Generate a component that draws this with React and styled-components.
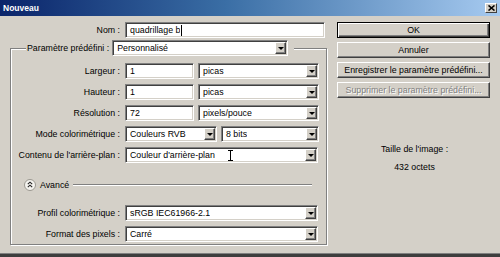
import React from 'react'
import styled, { createGlobalStyle } from 'styled-components'

const GlobalStyle = createGlobalStyle`
  body {
    margin: 0;
    background: #d4d0c8;
  }
  * { box-sizing: border-box; }
`

function App() {
  return (
    <>
      <GlobalStyle />
      <Window>
        <TitleBar>
          <span>Nouveau</span>
          <CloseBtn>
            <svg width="7" height="6" viewBox="0 0 7 6">
              <path d="M0.5 0.5 L6.5 5.5 M6.5 0.5 L0.5 5.5" stroke="#000" strokeWidth="1.6" />
            </svg>
          </CloseBtn>
        </TitleBar>
        <Body>
          <LeftCol>
            <Row>
              <Label w={121}>Nom :</Label>
              <Field w={200}>
                <FieldText>quadrillage b</FieldText>
                <Caret />
              </Field>
            </Row>

            <Group>
              <Legend>
                <span>Paramètre prédéfini :</span>
                <Combo w={176} value="Personnalisé" />
              </Legend>

              <Rows>
                <Row>
                  <Label w={110}>Largeur :</Label>
                  <Field w={69}><FieldText>1</FieldText></Field>
                  <Combo w={121} value="picas" />
                </Row>
                <Row>
                  <Label w={110}>Hauteur :</Label>
                  <Field w={69}><FieldText>1</FieldText></Field>
                  <Combo w={121} value="picas" />
                </Row>
                <Row>
                  <Label w={110}>Résolution :</Label>
                  <Field w={69}><FieldText>72</FieldText></Field>
                  <Combo w={121} value="pixels/pouce" />
                </Row>
                <Row>
                  <Label w={110}>Mode colorimétrique :</Label>
                  <Combo w={92} value="Couleurs RVB" />
                  <Combo w={98} value="8 bits" />
                </Row>
                <Row>
                  <Label w={110}>Contenu de l'arrière-plan :</Label>
                  <Combo w={193} value="Couleur d'arrière-plan" ibeam />
                </Row>
              </Rows>

              <AdvancedRow>
                <svg width="12" height="12" viewBox="0 0 12 12">
                  <circle cx="6" cy="6" r="5.5" fill="#f4f3ef" stroke="#9a9890" />
                  <path d="M3.8 5.2 L6 3.2 L8.2 5.2 M3.8 8.2 L6 6.2 L8.2 8.2" fill="none" stroke="#222" strokeWidth="1.1" />
                </svg>
                <AdvancedText>Avancé</AdvancedText>
                <Etched />
              </AdvancedRow>

              <Rows top={14}>
                <Row>
                  <Label w={110}>Profil colorimétrique :</Label>
                  <Combo w={193} value="sRGB IEC61966-2.1" />
                </Row>
                <Row>
                  <Label w={110}>Format des pixels :</Label>
                  <Combo w={193} value="Carré" />
                </Row>
              </Rows>
            </Group>
          </LeftCol>

          <RightCol>
            <Button primary>OK</Button>
            <Button>Annuler</Button>
            <Button>Enregistrer le paramètre prédéfini...</Button>
            <Button disabled>Supprimer le paramètre prédéfini...</Button>
            <Info>
              <div>Taille de l'image :</div>
              <div>432 octets</div>
            </Info>
          </RightCol>
        </Body>
      </Window>
    </>
  )
}

function Combo({ w, value, ibeam }) {
  return (
    <Field w={w}>
      <FieldText>{value}</FieldText>
      {ibeam && (
        <IBeam width="5" height="11" viewBox="0 0 5 11">
          <path d="M0 0.5 H5 M2.5 0.5 V10.5 M0 10.5 H5" stroke="#000" strokeWidth="1" fill="none" />
        </IBeam>
      )}
      <DropBtn><Arrow /></DropBtn>
    </Field>
  )
}

export default App

const Window = styled.div`
  width: 500px;
  height: 257px;
  display: flex;
  flex-direction: column;
  background: #d4d0c8;
  font-family: "Liberation Sans", Arial, sans-serif;
  font-size: 8.8px;
  color: #000;
  border-bottom: 3px solid #3e3e3e;
  overflow: hidden;
`

const TitleBar = styled.div`
  height: 16px;
  flex: none;
  display: flex;
  align-items: center;
  justify-content: space-between;
  padding: 0 3px 0 3px;
  background: linear-gradient(to right, #0a246a 0%, #3a6ea5 45%, #a6caf0 100%);
  color: #fff;
  font-weight: bold;
  font-size: 8.5px;
`

const CloseBtn = styled.div`
  width: 12px;
  height: 10px;
  display: flex;
  align-items: center;
  justify-content: center;
  background: #d4d0c8;
  border: 1px solid;
  border-color: #fff #404040 #404040 #fff;
`

const Body = styled.div`
  flex: 1;
  display: flex;
  padding-top: 6px;
  border-bottom: 1px solid #808080;
`

const LeftCol = styled.div`
  width: 330px;
  display: flex;
  flex-direction: column;
`

const RightCol = styled.div`
  width: 153px;
  margin-left: 7px;
  display: flex;
  flex-direction: column;
  gap: 4px;
`

const Row = styled.div`
  display: flex;
  align-items: center;
  gap: 4px;
  height: 16px;
`

const Label = styled.span`
  width: ${p => p.w}px;
  flex: none;
  text-align: right;
  white-space: nowrap;
  padding-right: 1px;
`

const Field = styled.div`
  position: relative;
  width: ${p => p.w}px;
  height: 16px;
  flex: none;
  display: flex;
  align-items: center;
  background: #fff;
  border: 1px solid;
  border-color: #808080 #fff #fff #808080;
  box-shadow: inset 1px 1px 0 #404040, inset -1px -1px 0 #d4d0c8;
`

const FieldText = styled.span`
  padding-left: 4px;
  white-space: nowrap;
  overflow: hidden;
  flex: none;
`

const Caret = styled.span`
  width: 1px;
  height: 11px;
  background: #000;
  margin-left: 1px;
`

const DropBtn = styled.div`
  margin-left: auto;
  margin-right: 1px;
  width: 11px;
  height: 12px;
  display: flex;
  align-items: center;
  justify-content: center;
  background: #d4d0c8;
  border: 1px solid;
  border-color: #fff #404040 #404040 #fff;
  box-shadow: inset -1px -1px 0 #808080;
`

const Arrow = styled.span`
  width: 0;
  height: 0;
  border-left: 3px solid transparent;
  border-right: 3px solid transparent;
  border-top: 3px solid #000;
`

const IBeam = styled.svg`
  position: absolute;
  left: 102px;
  top: 2px;
`

const Group = styled.fieldset`
  margin: 2px 0 0 10px;
  width: 317px;
  min-width: 0;
  padding: 0 0 2px 0;
  border: 1px solid #808080;
  box-shadow: inset 1px 1px 0 #fff, 1px 1px 0 #fff;
`

const Legend = styled.legend`
  display: flex;
  align-items: center;
  gap: 3px;
  margin-left: 15px;
  padding: 0 6px 0 1px;
  background: #d4d0c8;
  height: 16px;
`

const Rows = styled.div`
  display: flex;
  flex-direction: column;
  gap: 5px;
  padding-top: ${p => p.top ?? 7}px;
`

const AdvancedRow = styled.div`
  display: flex;
  align-items: center;
  height: 12px;
  margin-top: 16px;
  padding-left: 13px;
  padding-right: 14px;
`

const AdvancedText = styled.span`
  margin-left: 4px;
`

const Etched = styled.div`
  flex: 1;
  margin-left: 4px;
  border-top: 1px solid #808080;
  border-bottom: 1px solid #fff;
`

const Button = styled.button`
  width: 153px;
  height: 16px;
  padding: 0;
  font: inherit;
  color: ${p => (p.disabled ? '#808080' : '#000')};
  text-shadow: ${p => (p.disabled ? '1px 1px 0 #fff' : 'none')};
  background: #d4d0c8;
  border: 1px solid;
  border-color: ${p => (p.primary ? '#000' : '#fff #404040 #404040 #fff')};
  box-shadow: ${p =>
    p.primary
      ? 'inset 1px 1px 0 #fff, inset -1px -1px 0 #404040, inset -2px -2px 0 #808080'
      : 'inset -1px -1px 0 #808080'};
`

const Info = styled.div`
  margin-top: 42px;
  display: flex;
  flex-direction: column;
  align-items: center;
  gap: 8px;
  padding-left: 2px;
`
